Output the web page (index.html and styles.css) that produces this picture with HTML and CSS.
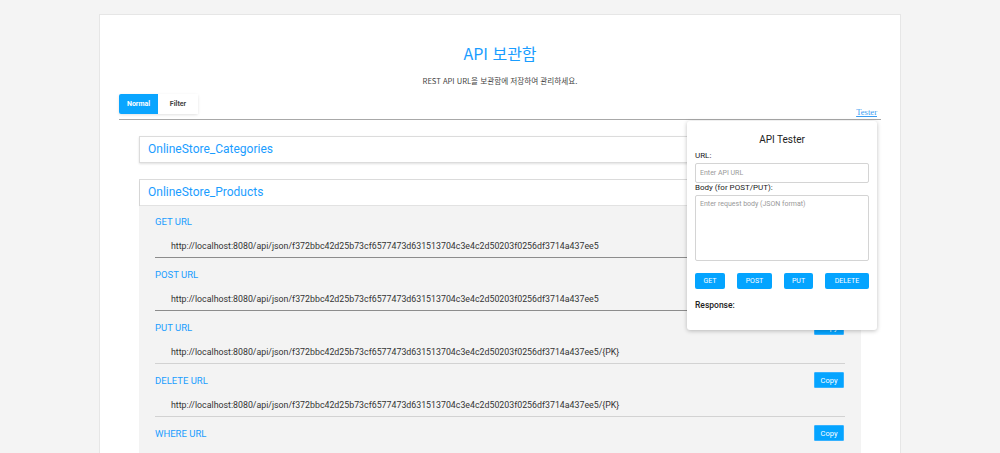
FILE: index.html
```html
<!DOCTYPE html>
<html lang="ko">
<head>
<meta charset="utf-8">
<title>API 보관함</title>
<link rel="stylesheet" href="styles.css">
</head>
<body>
<div class="page">
  <div class="container">
    <h1 class="title">API 보관함</h1>
    <p class="subtitle">REST API URL을 보관함에 저장하여 관리하세요.</p>
    <div class="toolbar">
      <div class="tabs">
        <button class="tab active">Normal</button>
        <button class="tab">Filter</button>
      </div>
      <a class="tester-link" href="#">Tester</a>
    </div>
    <div class="main">
      <div class="list">
        <div class="card"><div class="card-head">OnlineStore_Categories</div></div>
        <div class="card open">
          <div class="card-head">OnlineStore_Products</div>
          <div class="card-body">
            <div class="row dark">
              <div class="row-head"><span class="label">GET URL</span><button class="copy">Copy</button></div>
              <div class="url">http://localhost:8080/api/json/f372bbc42d25b73cf6577473d631513704c3e4c2d50203f0256df3714a437ee5</div>
            </div>
            <div class="row dark">
              <div class="row-head"><span class="label">POST URL</span><button class="copy">Copy</button></div>
              <div class="url">http://localhost:8080/api/json/f372bbc42d25b73cf6577473d631513704c3e4c2d50203f0256df3714a437ee5</div>
            </div>
            <div class="row">
              <div class="row-head"><span class="label">PUT URL</span><button class="copy">Copy</button></div>
              <div class="url">http://localhost:8080/api/json/f372bbc42d25b73cf6577473d631513704c3e4c2d50203f0256df3714a437ee5/{PK}</div>
            </div>
            <div class="row">
              <div class="row-head"><span class="label">DELETE URL</span><button class="copy">Copy</button></div>
              <div class="url">http://localhost:8080/api/json/f372bbc42d25b73cf6577473d631513704c3e4c2d50203f0256df3714a437ee5/{PK}</div>
            </div>
            <div class="row">
              <div class="row-head"><span class="label">WHERE URL</span><button class="copy">Copy</button></div>
            </div>
          </div>
        </div>
      </div>
      <div class="tester">
        <div class="tester-title">API Tester</div>
        <label class="field-label">URL:</label>
        <input class="input" type="text" placeholder="Enter API URL">
        <label class="field-label">Body (for POST/PUT):</label>
        <textarea class="textarea" placeholder="Enter request body (JSON format)"></textarea>
        <div class="methods">
          <button class="method m-get">GET</button>
          <button class="method m-post">POST</button>
          <button class="method m-put">PUT</button>
          <button class="method m-delete">DELETE</button>
        </div>
        <div class="response">Response:</div>
      </div>
    </div>
  </div>
</div>
</body>
</html>
```

FILE: styles.css
```css
html, body {
  margin: 0;
  padding: 0;
  height: 100%;
  overflow: hidden;
}
body {
  background: #f4f4f4;
  font-family: Roboto, "Noto Sans", "Noto Sans CJK KR", sans-serif;
  color: #333;
}
.page {
  padding-top: 14px;
}
.container {
  width: 802px;
  margin: 0 auto;
  background: #fff;
  border: 1px solid #e6e6e6;
  min-height: 460px;
  box-sizing: border-box;
  padding: 0 19px 0 19px;
}
.title {
  margin: 28px 0 0;
  text-align: center;
  font-size: 16px;
  font-weight: 400;
  line-height: 20px;
  color: #1a9dff;
  font-family: "Noto Sans CJK KR", "Noto Sans", sans-serif;
}
.subtitle {
  margin: 13px 0 0;
  text-align: center;
  font-size: 7.6px;
  line-height: 10px;
  color: #444;
  font-family: "Noto Sans CJK KR", "Noto Sans", sans-serif;
}
.toolbar {
  margin-top: 8px;
  display: flex;
  justify-content: space-between;
  align-items: flex-end;
  border-bottom: 1px solid #a8a8a8;
  padding-bottom: 2px;
}
.tabs {
  display: flex;
  box-shadow: 0 1px 3px rgba(0,0,0,0.12);
  border-radius: 2px;
  margin-bottom: 3px;
}
.tab {
  border: none;
  background: #fff;
  font-family: inherit;
  font-size: 7px;
  font-weight: 700;
  color: #444;
  height: 20px;
  width: 40px;
  padding: 0;
  cursor: pointer;
}
.tab.active {
  width: 39px;
  background: #0aa5ff;
  color: #fff;
  border-radius: 2px 0 0 2px;
}
.tester-link {
  font-size: 8.6px;
  color: #3a9cf0;
  text-decoration: underline;
  margin-right: 4px;
  line-height: 10px;
  font-family: "Liberation Serif", serif;
}
.main {
  position: relative;
}
.list {
  padding: 16px 20px 0 20px;
  display: flex;
  flex-direction: column;
  gap: 16px;
}
.card {
  background: #fff;
  border: 1px solid #dcdcdc;
  box-shadow: 0 1px 2px rgba(0,0,0,0.12);
}
.card-head {
  height: 25px;
  line-height: 25px;
  padding-left: 8px;
  font-size: 12px;
  color: #1a9dff;
}
.card.open {
  border-bottom: none;
  box-shadow: none;
}
.card.open .card-head {
  border-bottom: 1px solid #e2e2e2;
  box-shadow: 0 1px 2px rgba(0,0,0,0.08);
}
.card-body {
  background: #f3f3f3;
  padding: 0 16px 20px 16px;
  margin: 0 -1px;
}
.row {
  padding-top: 7px;
  border-bottom: 1px solid #d2d2d2;
}
.row:first-child {
  padding-top: 6px;
}
.row:last-child {
  border-bottom: none;
}
.row.dark {
  border-bottom-color: #8c8c8c;
}
.row-head {
  height: 18px;
  display: flex;
  justify-content: space-between;
  align-items: center;
}
.label {
  font-size: 9.5px;
  color: #1a9dff;
}
.copy {
  border: 1px solid #36b2ff;
  background: #04a4ff;
  color: #fff;
  font-family: inherit;
  font-size: 7.5px;
  width: 30px;
  height: 16px;
  padding: 0;
  margin-right: 1px;
  border-radius: 1px;
}
.url {
  padding: 10px 0 5px 16px;
  font-size: 8.8px;
  line-height: 12px;
  color: #333;
  white-space: nowrap;
}
.tester {
  position: absolute;
  top: 1px;
  right: 4px;
  width: 190px;
  height: 209px;
  box-sizing: border-box;
  background: #fff;
  border-radius: 3px;
  box-shadow: 0 1px 4px rgba(0,0,0,0.25);
  padding: 13px 8px 0 8px;
  display: flex;
  flex-direction: column;
}
.tester-title {
  text-align: center;
  font-size: 10px;
  line-height: 12px;
  color: #222;
  margin-bottom: 5px;
}
.field-label {
  font-size: 8px;
  line-height: 10px;
  color: #222;
  margin-bottom: 2px;
}
.input {
  height: 20px;
  box-sizing: border-box;
  border: 1px solid #d4d4d4;
  border-radius: 2px;
  font-family: inherit;
  font-size: 7px;
  padding: 0 4px;
  margin: 0;
  outline: none;
}
.textarea {
  height: 66px;
  box-sizing: border-box;
  border: 1px solid #d4d4d4;
  border-radius: 2px;
  font-family: inherit;
  font-size: 7px;
  padding: 4px;
  margin: 0;
  resize: none;
  outline: none;
}
.input::placeholder, .textarea::placeholder {
  color: #999;
}
.methods {
  display: flex;
  justify-content: space-between;
  margin-top: 12px;
}
.method {
  border: none;
  background: #04a4ff;
  color: #fff;
  font-family: inherit;
  font-size: 7px;
  height: 16px;
  padding: 0;
  border-radius: 2px;
}
.m-get { width: 30px; }
.m-post { width: 35px; }
.m-put { width: 29px; }
.m-delete { width: 44px; }
.response {
  margin-top: 11px;
  font-size: 8.5px;
  line-height: 10px;
  font-weight: 500;
  color: #222;
}
```
